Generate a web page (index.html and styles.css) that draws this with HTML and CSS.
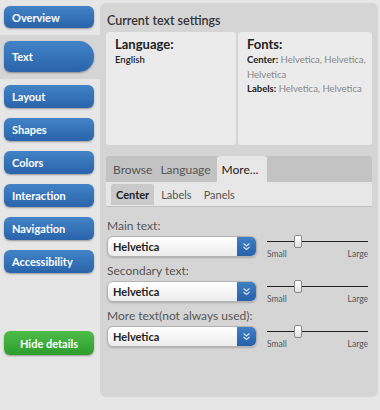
FILE: index.html
```html
<!DOCTYPE html>
<html lang="en">
<head>
    <meta charset="UTF-8">
    <title>Text settings</title>
    <link rel="stylesheet" href="styles.css">
</head>
<body>
    <div class="page">
        <div class="sidebar">
            <a class="nav-btn first">Overview</a>
            <div class="nav-active">
                <a class="nav-btn current">Text</a>
            </div>
            <a class="nav-btn">Layout</a>
            <a class="nav-btn">Shapes</a>
            <a class="nav-btn">Colors</a>
            <a class="nav-btn">Interaction</a>
            <a class="nav-btn">Navigation</a>
            <a class="nav-btn">Accessibility</a>
            <a class="nav-btn green">Hide details</a>
        </div>

        <div class="panel">
            <h2>Current text settings</h2>
            <div class="summary">
                <div class="summary-box">
                    <h3>Language:</h3>
                    <p class="value">English</p>
                </div>
                <div class="summary-box">
                    <h3>Fonts:</h3>
                    <p><strong>Center:</strong> Helvetica, Helvetica,<br>Helvetica</p>
                    <p><strong>Labels:</strong> Helvetica, Helvetica</p>
                </div>
            </div>

            <div class="tabs">
                <div class="tab-row">
                    <span class="tab">Browse</span>
                    <span class="tab">Language</span>
                    <span class="tab active">More...</span>
                </div>
                <div class="sub-row">
                    <span class="sub active">Center</span>
                    <span class="sub">Labels</span>
                    <span class="sub">Panels</span>
                </div>
            </div>

            <div class="field">
                <div class="field-label">Main text:</div>
                <div class="field-row">
                    <div class="select">
                        <span>Helvetica</span>
                        <span class="select-arrow"><svg width="9" height="9" viewBox="0 0 9 9"><path d="M1.5 1.5 L4.5 4 L7.5 1.5 M1.5 5 L4.5 7.5 L7.5 5" fill="none" stroke="#cfe0f5" stroke-width="1.3"/></svg></span>
                    </div>
                    <div class="slider">
                        <div class="track"><div class="thumb"></div></div>
                        <div class="slider-labels"><span>Small</span><span>Large</span></div>
                    </div>
                </div>
            </div>

            <div class="field">
                <div class="field-label">Secondary text:</div>
                <div class="field-row">
                    <div class="select">
                        <span>Helvetica</span>
                        <span class="select-arrow"><svg width="9" height="9" viewBox="0 0 9 9"><path d="M1.5 1.5 L4.5 4 L7.5 1.5 M1.5 5 L4.5 7.5 L7.5 5" fill="none" stroke="#cfe0f5" stroke-width="1.3"/></svg></span>
                    </div>
                    <div class="slider">
                        <div class="track"><div class="thumb"></div></div>
                        <div class="slider-labels"><span>Small</span><span>Large</span></div>
                    </div>
                </div>
            </div>

            <div class="field">
                <div class="field-label">More text(not always used):</div>
                <div class="field-row">
                    <div class="select">
                        <span>Helvetica</span>
                        <span class="select-arrow"><svg width="9" height="9" viewBox="0 0 9 9"><path d="M1.5 1.5 L4.5 4 L7.5 1.5 M1.5 5 L4.5 7.5 L7.5 5" fill="none" stroke="#cfe0f5" stroke-width="1.3"/></svg></span>
                    </div>
                    <div class="slider">
                        <div class="track"><div class="thumb"></div></div>
                        <div class="slider-labels"><span>Small</span><span>Large</span></div>
                    </div>
                </div>
            </div>
        </div>
    </div>
</body>
</html>
```

FILE: styles.css
```css
body {
    margin: 0;
    background-color: #e6e6e6;
    font-family: Lato, "Open Sans", sans-serif;
    color: #333;
}
.page {
    display: flex;
    width: 380px;
    height: 410px;
}
.sidebar {
    width: 100px;
    display: flex;
    flex-direction: column;
    padding-top: 6px;
}
.nav-btn {
    display: flex;
    align-items: center;
    height: 23px;
    margin: 0 6px 10px 4px;
    padding-left: 8px;
    border-radius: 6px;
    background: linear-gradient(#4283c6, #2a64ab);
    box-shadow: 0 1px 2px rgba(0,0,0,0.35);
    color: white;
    font-size: 11px;
    font-weight: bold;
}
.nav-btn.first {
    height: 22px;
    margin-bottom: 7px;
}
.nav-active {
    background-color: #d5d5d5;
    padding: 6px 0 7px;
    margin-bottom: 6px;
}
.nav-btn.current {
    height: 31px;
    margin-bottom: 0;
    border-radius: 6px 15px 15px 6px;
}
.nav-btn.green {
    margin-top: 48px;
    justify-content: center;
    padding-left: 0;
    height: 24px;
    background: linear-gradient(#4cbc48, #2f9d2e);
}
.panel {
    width: 266px;
    height: 382px;
    margin-top: 3px;
    padding: 6px;
    background-color: #d5d5d5;
    border-radius: 6px;
}
.panel h2 {
    margin: 3px 0 0 1px;
    font-size: 12.5px;
    font-weight: 600;
    line-height: 17px;
    color: #333;
}
.summary {
    display: grid;
    grid-template-columns: 130px 1fr;
    gap: 2px;
    margin-top: 3px;
    height: 113px;
}
.summary-box {
    background-color: #ebebeb;
    border-radius: 3px;
    padding: 3px 4px 0 9px;
}
.summary-box h3 {
    margin: 0;
    font-size: 13px;
    line-height: 18px;
    font-weight: bold;
    color: #222;
}
.summary-box p {
    margin: 0;
    font-size: 9.5px;
    line-height: 14.5px;
    color: #888;
}
.summary-box p strong {
    color: #222;
}
.summary-box p.value {
    color: #222;
    font-weight: 600;
}
.tabs {
    margin-top: 11px;
    border-bottom: 1px solid #c2c2c2;
}
.tab-row {
    display: flex;
    height: 26px;
    background-color: #c3c3c3;
    padding-left: 3px;
    border-radius: 3px 3px 0 0;
}
.tab {
    display: flex;
    align-items: center;
    padding: 0 4px;
    font-size: 12px;
    color: #555;
}
.tab.active {
    background-color: #e7e7e7;
    color: #222;
    border-radius: 3px 3px 0 0;
    margin-left: 2px;
    padding: 0 9px 0 5px;
}
.sub-row {
    display: flex;
    gap: 2px;
    height: 24px;
    align-items: center;
    background-color: #e7e7e7;
    padding-left: 5px;
}
.sub {
    padding: 4px 5px;
    font-size: 11px;
    color: #555;
}
.sub.active {
    background-color: #c9c9c9;
    color: #222;
    font-weight: bold;
    border-radius: 2px 2px 0 0;
}
.field {
    margin-top: 12px;
}
.field + .field {
    margin-top: 5px;
}
.field-label {
    font-size: 12px;
    line-height: 14px;
    color: #555;
    margin-left: 1px;
}
.field-row {
    display: flex;
    margin-top: 3px;
}
.select {
    display: flex;
    justify-content: space-between;
    width: 148px;
    height: 19px;
    margin-left: 1px;
    border: 1px solid #b3b3b3;
    border-radius: 6px;
    background: linear-gradient(#ffffff, #ececec);
    box-shadow: 0 1px 2px rgba(0,0,0,0.2);
    overflow: hidden;
}
.select span:first-child {
    padding-left: 5px;
    font-size: 11px;
    font-weight: bold;
    line-height: 19px;
    color: #222;
}
.select-arrow {
    display: flex;
    align-items: center;
    justify-content: center;
    width: 19px;
    background: linear-gradient(#3f7fc3, #2861a8);
}
.slider {
    width: 101px;
    margin-left: 10px;
}
.track {
    position: relative;
    height: 1px;
    margin-top: 5px;
    background-color: #222;
}
.thumb {
    position: absolute;
    left: 27px;
    top: -6px;
    width: 6px;
    height: 11px;
    border: 1px solid #888;
    border-radius: 2px;
    background: linear-gradient(#ffffff, #e2e2e2);
}
.slider-labels {
    display: flex;
    justify-content: space-between;
    margin-top: 7px;
    font-size: 8.5px;
    color: #555;
}
```
